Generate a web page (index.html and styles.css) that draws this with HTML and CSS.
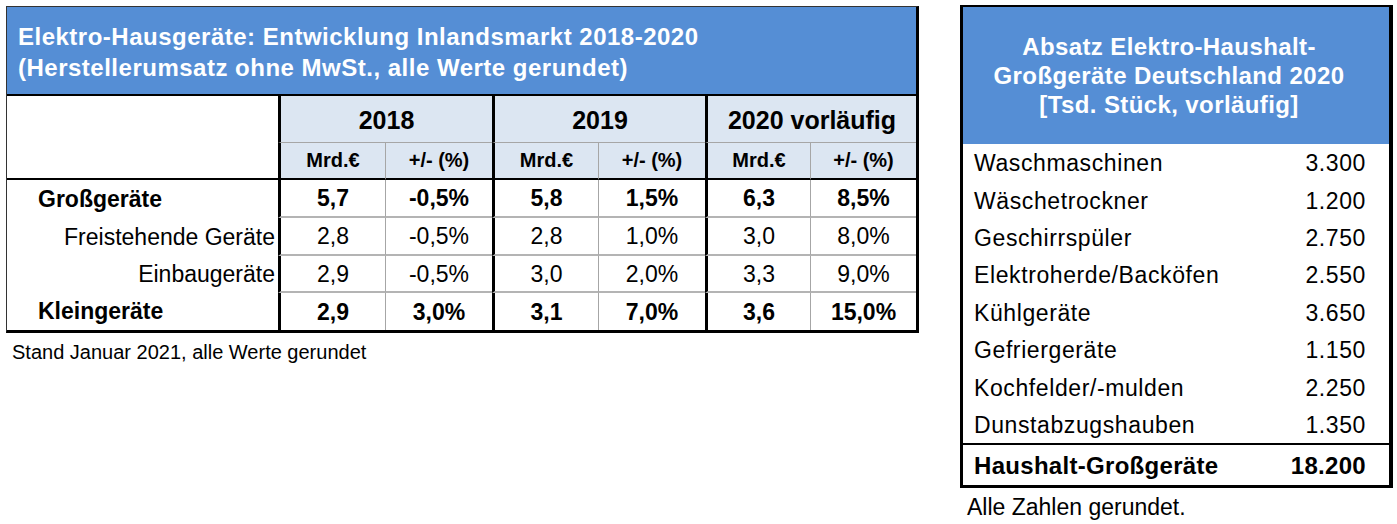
FILE: index.html
```html
<!DOCTYPE html>
<html lang="de">
<head>
<meta charset="utf-8">
<title>Elektro-Hausgeräte</title>
<link rel="stylesheet" href="styles.css">
</head>
<body>
<div class="page">
  <section class="left">
    <div class="ltable">
      <div class="ltitle">
        <div>Elektro-Hausgeräte: Entwicklung Inlandsmarkt 2018-2020<br>(Herstellerumsatz ohne MwSt., alle Werte gerundet)</div>
      </div>
      <div class="grid">
        <div class="c corner"></div>
        <div class="c year g">2018</div>
        <div class="c year g">2019</div>
        <div class="c year g">2020 vorläufig</div>

        <div class="c sub g">Mrd.€</div>
        <div class="c sub p">+/- (%)</div>
        <div class="c sub g">Mrd.€</div>
        <div class="c sub p">+/- (%)</div>
        <div class="c sub g">Mrd.€</div>
        <div class="c sub p">+/- (%)</div>

        <div class="c lab b">Großgeräte</div>
        <div class="c num b g row">5,7</div>
        <div class="c num b p row">-0,5%</div>
        <div class="c num b g row">5,8</div>
        <div class="c num b p row">1,5%</div>
        <div class="c num b g row">6,3</div>
        <div class="c num b p row">8,5%</div>

        <div class="c lab sub-lab">Freistehende Geräte</div>
        <div class="c num g row">2,8</div>
        <div class="c num p row">-0,5%</div>
        <div class="c num g row">2,8</div>
        <div class="c num p row">1,0%</div>
        <div class="c num g row">3,0</div>
        <div class="c num p row">8,0%</div>

        <div class="c lab sub-lab">Einbaugeräte</div>
        <div class="c num g row">2,9</div>
        <div class="c num p row">-0,5%</div>
        <div class="c num g row">3,0</div>
        <div class="c num p row">2,0%</div>
        <div class="c num g row">3,3</div>
        <div class="c num p row">9,0%</div>

        <div class="c lab b">Kleingeräte</div>
        <div class="c num b g">2,9</div>
        <div class="c num b p">3,0%</div>
        <div class="c num b g">3,1</div>
        <div class="c num b p">7,0%</div>
        <div class="c num b g">3,6</div>
        <div class="c num b p">15,0%</div>
      </div>
    </div>
    <p class="lnote">Stand Januar 2021, alle Werte gerundet</p>
  </section>

  <section class="right">
    <div class="rbox">
      <div class="rtitle">Absatz Elektro-Haushalt-<br>Großgeräte Deutschland 2020<br>[Tsd. Stück, vorläufig]</div>
      <div class="rrows">
        <div class="rrow"><span>Waschmaschinen</span><span>3.300</span></div>
        <div class="rrow"><span>Wäschetrockner</span><span>1.200</span></div>
        <div class="rrow"><span>Geschirrspüler</span><span>2.750</span></div>
        <div class="rrow"><span>Elektroherde/Backöfen</span><span>2.550</span></div>
        <div class="rrow"><span>Kühlgeräte</span><span>3.650</span></div>
        <div class="rrow"><span>Gefriergeräte</span><span>1.150</span></div>
        <div class="rrow"><span>Kochfelder/-mulden</span><span>2.250</span></div>
        <div class="rrow"><span>Dunstabzugshauben</span><span>1.350</span></div>
      </div>
      <div class="rtotal"><span>Haushalt-Großgeräte</span><span>18.200</span></div>
    </div>
    <p class="rnote">Alle Zahlen gerundet.</p>
  </section>
</div>
</body>
</html>
```
FILE: styles.css
```css
* { box-sizing: border-box; }
body {
  margin: 0;
  background: #fff;
  font-family: "Liberation Sans", Arial, sans-serif;
  color: #000;
}
.page {
  display: flex;
  align-items: flex-start;
  gap: 41px;
  padding: 5px 0 0 6px;
}
.left { margin-top: 1px; }
.ltable {
  width: 913px;
  border-left: 1px solid #333;
  border-top: 1px solid #333;
  border-right: 3px solid #000;
  border-bottom: 3px solid #000;
}
.ltitle {
  height: 89px;
  background: #558ed5;
  border-bottom: 2px solid #000;
  color: #fff;
  font-weight: bold;
  font-size: 24px;
  letter-spacing: 0.5px;
  line-height: 31px;
  padding: 2px 11px 0;
  display: flex;
  align-items: center;
}
.grid {
  display: grid;
  grid-template-columns: 271px 107px 107px 106px 107px 105px 106px;
  grid-template-rows: 47px 37px 38px 38px 37px 37px;
}
.c {
  display: flex;
  align-items: center;
  justify-content: center;
  font-size: 23px;
}
.corner {
  grid-row: 1 / span 2;
  background: #fff;
  border-bottom: 2px solid #000;
}
.year {
  grid-column: span 2;
  background: #dce6f2;
  border-bottom: 1px solid #a6a6a6;
  font-weight: bold;
  font-size: 25px;
  padding-top: 2px;
}
.sub {
  background: #dce6f2;
  border-bottom: 2px solid #000;
  font-weight: bold;
  font-size: 20px;
}
.g { border-left: 3px solid #000; }
.p { border-left: 1px solid #a6a6a6; }
.row { border-bottom: 2px solid #b4b4b4; }
.num { padding-top: 1px; }
.b { font-weight: bold; }
.lab {
  justify-content: flex-start;
  padding-left: 31px;
}
.sub-lab {
  justify-content: flex-end;
  padding: 0 3px 0 0;
}
.lnote {
  margin: 8px 0 0 6px;
  font-size: 20px;
  line-height: 22px;
}

.rbox {
  width: 433px;
  border-left: 3px solid #000;
  border-top: 2px solid #000;
  border-right: 4px solid #000;
  border-bottom: 3px solid #000;
}
.rtitle {
  height: 137px;
  background: #558ed5;
  color: #fff;
  font-weight: bold;
  font-size: 24px;
  letter-spacing: 0.4px;
  line-height: 29px;
  text-align: center;
  padding-right: 14px;
  display: flex;
  align-items: center;
  justify-content: center;
}
.rrows {
  display: flex;
  flex-direction: column;
  border-bottom: 2px solid #000;
}
.rrow, .rtotal {
  display: flex;
  justify-content: space-between;
  align-items: center;
  padding: 0 23px 0 11px;
  font-size: 23px;
  letter-spacing: 0.6px;
}
.rrow { height: 37.4px; padding-top: 2px; }
.rtotal {
  height: 40px;
  font-weight: bold;
  font-size: 24px;
  letter-spacing: 0.3px;
  padding-top: 2px;
}
.rnote {
  margin: 6px 0 0 7px;
  font-size: 23px;
  line-height: 26px;
}
```
